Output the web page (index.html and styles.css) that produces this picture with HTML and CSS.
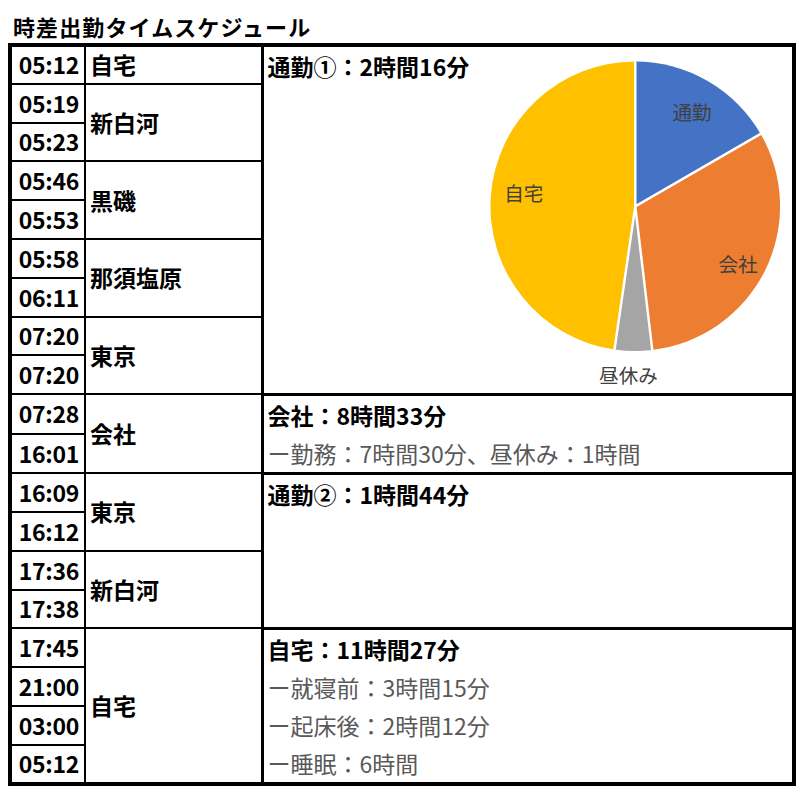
FILE: index.html
```html
<!DOCTYPE html>
<html lang="ja">
<head>
<meta charset="utf-8">
<title>時差出勤タイムスケジュール</title>
<link rel="stylesheet" href="styles.css">
</head>
<body>
<div class="page">
  <h1 class="title">時差出勤タイムスケジュール</h1>
  <table class="sched">
    <colgroup><col class="c-time"><col class="c-name"><col class="c-panel"></colgroup>
    <tr><td class="t">05:12</td><td class="n">自宅</td>
      <td class="p" rowspan="9">
        <div class="chart-panel">
          <div class="line head">通勤①：2時間16分</div>
          <svg class="pie" width="330" height="344" viewBox="0 0 330 344">
            <path d="M170,159 L170,11 A148,148 0 0 1 298.17,85 Z" fill="#4472C4"/>
            <path d="M170,159 L298.17,85 A148,148 0 0 1 187.40,305.97 Z" fill="#ED7D31"/>
            <path d="M170,159 L187.40,305.97 A148,148 0 0 1 148.76,305.47 Z" fill="#A5A5A5"/>
            <path d="M170,159 L148.76,305.47 A148,148 0 0 1 170,11 Z" fill="#FFC000"/>
            <g class="slice-lines">
              <path d="M170,11 L170,159 L298.17,85 M170,159 L187.40,305.97 M170,159 L148.76,305.47"/>
            </g>
            <text x="228" y="62" class="lbl">通勤</text>
            <text x="275" y="217" class="lbl">会社</text>
            <text x="56" y="145" class="lbl">自宅</text>
            <text x="163" y="331" class="lbl">昼休み</text>
          </svg>
        </div>
      </td></tr>
    <tr><td class="t">05:19</td><td class="n" rowspan="2">新白河</td></tr>
    <tr><td class="t">05:23</td></tr>
    <tr><td class="t">05:46</td><td class="n" rowspan="2">黒磯</td></tr>
    <tr><td class="t">05:53</td></tr>
    <tr><td class="t">05:58</td><td class="n" rowspan="2">那須塩原</td></tr>
    <tr><td class="t">06:11</td></tr>
    <tr><td class="t">07:20</td><td class="n" rowspan="2">東京</td></tr>
    <tr><td class="t">07:20</td></tr>
    <tr><td class="t">07:28</td><td class="n" rowspan="2">会社</td>
      <td class="p" rowspan="2">
        <div class="line head">会社：8時間33分</div>
        <div class="line sub">ー勤務：7時間30分、昼休み：1時間</div>
      </td></tr>
    <tr><td class="t">16:01</td></tr>
    <tr><td class="t">16:09</td><td class="n" rowspan="2">東京</td>
      <td class="p" rowspan="4">
        <div class="line head">通勤②：1時間44分</div>
      </td></tr>
    <tr><td class="t">16:12</td></tr>
    <tr><td class="t">17:36</td><td class="n" rowspan="2">新白河</td></tr>
    <tr><td class="t">17:38</td></tr>
    <tr><td class="t">17:45</td><td class="n" rowspan="4">自宅</td>
      <td class="p" rowspan="4">
        <div class="line head">自宅：11時間27分</div>
        <div class="line sub">ー就寝前：3時間15分</div>
        <div class="line sub">ー起床後：2時間12分</div>
        <div class="line sub">ー睡眠：6時間</div>
      </td></tr>
    <tr><td class="t">21:00</td></tr>
    <tr><td class="t">03:00</td></tr>
    <tr><td class="t">05:12</td></tr>
  </table>
</div>
</body>
</html>
```

FILE: styles.css
```css
* { box-sizing: border-box; }
html, body { margin: 0; padding: 0; background: #fff; }
body {
  font-family: "Noto Sans CJK JP", "Noto Sans", sans-serif;
  color: #000;
  width: 800px;
  height: 800px;
  overflow: hidden;
}
.page {
  padding: 11px 4px 0 8px;
}
.title {
  margin: 0 0 2px 0;
  padding-left: 5px;
  font-size: 22px;
  line-height: 30px;
  font-weight: 700;
  letter-spacing: 1.1px;
}
.sched {
  width: 788px;
  table-layout: fixed;
  border-collapse: collapse;
  border: 4px solid #000;
}
.c-time { width: 75px; }
.c-name { width: 177px; }
.sched tr { height: 38.8px; }
.sched td {
  padding: 0;
  font-size: 23px;
  line-height: 1;
}
.t {
  border: 2px solid #000;
  text-align: right;
  padding-right: 5px !important;
  font-weight: 700;
  vertical-align: middle;
  letter-spacing: -0.3px;
}
.n {
  border: 2px solid #000;
  padding-left: 4px !important;
  font-weight: 700;
  vertical-align: middle;
}
.p {
  border: 3px solid #000;
  vertical-align: top;
  padding-left: 4px !important;
}
.line {
  height: 38px;
  line-height: 38px;
  white-space: nowrap;
}
.head { font-weight: 700; }
.sub { color: #595959; font-weight: 400; }
.chart-panel {
  display: flex;
  align-items: flex-start;
  height: 344px;
}
.pie {
  display: block;
  margin-left: auto;
  margin-right: 0;
}
.slice-lines path {
  fill: none;
  stroke: #fff;
  stroke-width: 2.5;
}
.lbl {
  font-family: "Noto Sans CJK JP", sans-serif;
  font-size: 20px;
  fill: #404040;
  text-anchor: middle;
  dominant-baseline: central;
}
```
